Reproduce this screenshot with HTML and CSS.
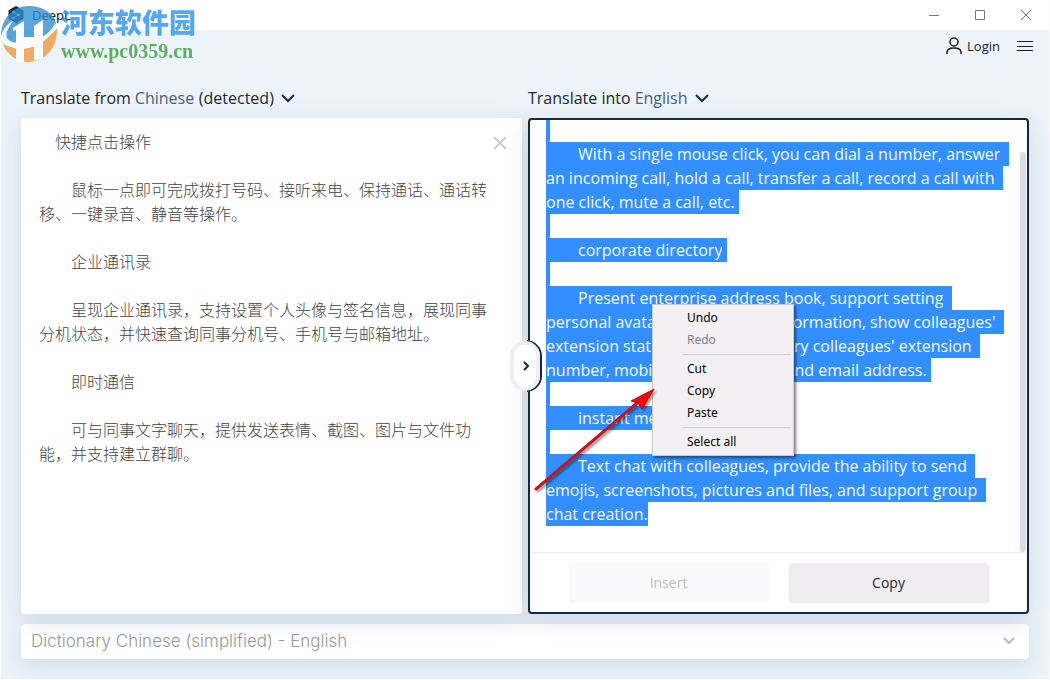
FILE: index.html
```html
<!DOCTYPE html>
<html lang="en">
<head>
    <meta charset="UTF-8">
    <meta name="viewport" content="width=device-width, initial-scale=1.0">
    <title>DeepL</title>
    <link rel="stylesheet" href="styles.css">
</head>
<body>
    <div class="window">
        <header class="titlebar">
            <svg class="app-icon" viewBox="0 0 16 18" width="16" height="18">
                <path d="M8 0l7.500 4.300v8.400L10 16v2l-3-1.600L.500 12.700V4.300z" fill="#0f2b46" />
                <path d="M5.500 6l5 3-5 3" fill="none" stroke="#fff" stroke-width=".8" />
                <circle cx="5.500" cy="6" r="1.300" fill="#fff" />
                <circle cx="10.500" cy="9" r="1.300" fill="#fff" />
                <circle cx="5.500" cy="12" r="1.300" fill="#fff" />
            </svg>
            <span class="app-name">DeepL</span>
            <div class="window-buttons">
                <button type="button" aria-label="Minimize"><svg viewBox="0 0 10 10" width="10" height="10"><path d="M0 5.500h10" /></svg></button>
                <button type="button" aria-label="Maximize"><svg viewBox="0 0 10 10" width="10" height="10"><path d="M.500.500h9v9h-9z" /></svg></button>
                <button type="button" aria-label="Close"><svg viewBox="0 0 10 10" width="10" height="10"><path d="M0 0l10 10M10 0L0 10" /></svg></button>
            </div>
        </header>

        <div class="watermark">
            <svg viewBox="0 0 58 58" width="58" height="58">
                <path d="M0 32C0 13 12 1 28 1c15 0 25 8 27 17-3 8-11 14-21 17-12 4-24 4-28-2-2-4 1-11 7-18C6 19 1 25 0 32z" fill="#3490d0" />
                <path d="M2 39c9 5 22 4 34-1 9-4 16-9 20-15 1 18-10 33-28 34-12 0-22-7-26-18z" fill="#f09a3e" />
                <path d="M12 23l11-7v41h-8V25l-3 1zM33 21l9-6v38l-9 3V38H23v-6h10z" fill="#fff" />
                <path d="M1 34c7 7 19 7 32 2 10-4 18-10 21-18-1 10-9 18-20 23C21 46 7 45 1 34z" fill="#fff" />
            </svg>
            <div class="watermark-text">
                <strong lang="zh">河东软件园</strong>
                <span>www.pc0359.cn</span>
            </div>
        </div>

        <nav class="toolbar">
            <a href="#" class="login">
                <svg viewBox="0 0 16 18" width="16" height="18">
                    <circle cx="8" cy="5" r="4" />
                    <path d="M1 17v-1.500C1 12.500 3.500 11 8 11s7 1.500 7 4.500V17" />
                </svg>
                Login
            </a>
            <button type="button" class="menu-button" aria-label="Menu">
                <svg viewBox="0 0 16 12" width="16" height="12"><path d="M0 1.500h16M0 6.500h16M0 10.500h16" /></svg>
            </button>
        </nav>

        <main>
            <div class="panels">
                <section class="side">
                    <div class="language">
                        <label for="sourceLang">Translate from</label>
                        <select id="sourceLang"><option>Chinese</option></select>
                        <span>(detected)</span>
                        <svg viewBox="0 0 14 10" width="14" height="10"><path d="M1 2l6 6 6-6" /></svg>
                    </div>
                    <div class="panel">
                        <textarea id="source" lang="zh" spellcheck="false" aria-label="Source text">　快捷点击操作

　　鼠标一点即可完成拨打号码、接听来电、保持通话、通话转移、一键录音、静音等操作。

　　企业通讯录

　　呈现企业通讯录，支持设置个人头像与签名信息，展现同事分机状态，并快速查询同事分机号、手机号与邮箱地址。

　　即时通信

　　可与同事文字聊天，提供发送表情、截图、图片与文件功能，并支持建立群聊。</textarea>
                        <button type="button" class="clear-button" aria-label="Clear">
                            <svg viewBox="0 0 14 14" width="14" height="14"><path d="M1 1l12 12M13 1L1 13" /></svg>
                        </button>
                    </div>
                </section>

                <section class="side">
                    <div class="language">
                        <label for="targetLang">Translate into</label>
                        <select id="targetLang"><option>English</option></select>
                        <svg viewBox="0 0 14 10" width="14" height="10"><path d="M1 2l6 6 6-6" /></svg>
                    </div>
                    <div class="panel panel-active">
                        <div class="scroll-area">
                            <textarea id="target" spellcheck="false" aria-label="Translation">


　　With a single mouse click, you can dial a number, answer an incoming call, hold a call, transfer a call, record a call with one click, mute a call, etc.

　　corporate directory

　　Present enterprise address book, support setting personal avatar and signature information, show colleagues' extension status, and quickly query colleagues' extension number, mobile phone number and email address.

　　instant messaging

　　Text chat with colleagues, provide the ability to send emojis, screenshots, pictures and files, and support group chat creation.</textarea>
                            <div class="scroll-thumb"></div>
                        </div>
                        <div class="actions">
                            <button type="button" disabled>Insert</button>
                            <button type="button">Copy</button>
                        </div>
                        <button type="button" class="collapse-button" aria-label="Collapse">
                            <svg viewBox="0 0 34 52" width="34" height="52">
                                <path d="M18 0c8 2 15 7 15 16v20c0 9-7 14-15 16z" fill="#fff" />
                                <path d="M18 1c8 1 14 7 14 15v20c0 8-6 14-14 15" fill="none" stroke="#0f2b46" stroke-width="2" />
                                <rect x="3" y="3" width="26" height="46" rx="13" fill="#fff" stroke="#f0eef2" stroke-width="4" />
                                <path d="M15 22l4 4-4 4" fill="none" stroke="#0f2b46" stroke-width="2" />
                            </svg>
                        </button>
                    </div>
                </section>
            </div>

            <button type="button" class="dictionary">
                <span>Dictionary Chinese (simplified) - English</span>
                <svg viewBox="0 0 12 8" width="12" height="8"><path d="M1 1l5 5 5-5" /></svg>
            </button>
        </main>

        <div class="context-menu" role="menu">
            <button type="button" role="menuitem">Undo</button>
            <button type="button" role="menuitem" disabled>Redo</button>
            <hr>
            <button type="button" role="menuitem">Cut</button>
            <button type="button" role="menuitem">Copy</button>
            <button type="button" role="menuitem">Paste</button>
            <hr>
            <button type="button" role="menuitem">Select all</button>
        </div>

        <svg class="arrow" viewBox="0 0 126 110" width="126" height="110">
            <path d="M3 105L103 20" fill="none" stroke="#c01822" stroke-width="3" stroke-linecap="round" />
            <path d="M121 5L98 17l7 2 4 6z" fill="#f50808" stroke="#b01018" stroke-width="1" />
        </svg>
    </div>

    <script>
        // Select the whole translation and show the end of it
        const target = document.getElementById('target');
        target.focus();
        target.select();
        target.scrollTop = target.scrollHeight;
    </script>
</body>
</html>
```
FILE: styles.css
```css
* {
    box-sizing: border-box;
}

body {
    margin: 0;
    font-family: "Open Sans", "Noto Sans CJK SC", sans-serif;
    color: #26262b;
}

button,
select,
textarea {
    font: inherit;
    color: inherit;
    border: none;
    background: none;
    padding: 0;
    margin: 0;
    outline: none;
}

svg {
    display: block;
    flex: none;
}

.window {
    position: relative;
    display: flex;
    flex-direction: column;
    min-height: 100vh;
    background: #ecf4fa;
    border: 1px solid #fafcfd;
    border-top: none;
}

/* Title bar */
.titlebar {
    display: flex;
    align-items: center;
    height: 30px;
    padding-left: 7px;
    background: #fff;
}

.app-name {
    margin-left: 8px;
    font-size: 13px;
    line-height: 20px;
    color: #000;
}

.window-buttons {
    display: flex;
    margin-left: auto;
}

.window-buttons button {
    display: flex;
    justify-content: center;
    align-items: center;
    width: 46px;
    height: 30px;
}

.window-buttons svg {
    fill: none;
    stroke: #777;
    stroke-width: 1;
}

.watermark {
    position: absolute;
    top: 5px;
    left: 0;
    display: flex;
    gap: 2px;
    opacity: 0.8;
}

.watermark-text {
    display: flex;
    flex-direction: column;
}

.watermark strong {
    font-size: 27px;
    line-height: 36px;
    font-weight: 900;
    color: #2b93ec;
}

.watermark span {
    font: bold 20px/20px "Liberation Serif", serif;
    color: #3f9c38;
}

/* Toolbar */
.toolbar {
    display: flex;
    justify-content: flex-end;
    align-items: center;
    gap: 17px;
    height: 32px;
    padding-right: 16px;
}

.login {
    display: flex;
    align-items: center;
    gap: 5px;
    font-size: 13px;
    line-height: 18px;
    color: #1b1b1f;
    text-decoration: none;
}

.toolbar svg {
    fill: none;
    stroke: #1b1b2f;
    stroke-width: 1.5;
}

.menu-button svg {
    stroke-width: 1;
}

/* Panels */
main {
    flex: 1;
    display: flex;
    flex-direction: column;
    gap: 10px;
    padding: 16px 20px 20px;
}

.panels {
    flex: 1;
    display: grid;
    grid-template-columns: 1fr 1fr;
    gap: 6px;
}

.side {
    display: flex;
    flex-direction: column;
}

.language {
    display: flex;
    align-items: center;
    gap: 4px;
    height: 40px;
    font-size: 16px;
    line-height: 24px;
}

.language select {
    appearance: none;
    color: #46607a;
}

.language svg {
    margin-left: 3px;
    fill: none;
    stroke: #0f2b46;
    stroke-width: 2;
}

.panel {
    position: relative;
    flex: 1;
    display: flex;
    flex-direction: column;
    background: #fff;
    border-radius: 4px;
    box-shadow: 0 6px 24px rgba(15, 43, 70, 0.12);
}

.panel-active {
    border: 2px solid #0f2b46;
}

textarea {
    display: block;
    flex: 1 1 0;
    width: 100%;
    min-height: 0;
    resize: none;
    font-size: 16px;
    line-height: 24px;
}

#source {
    padding: 12px 30px 12px 18px;
    font-weight: 300;
    color: #444;
}

.scroll-area {
    position: relative;
    display: flex;
    flex: 1 1 0;
    min-height: 0;
}

#target {
    padding: 8px 18px 26px 16px;
    scrollbar-width: none;
}

#target::selection {
    background: #338fff;
    color: #f4faff;
}

.scroll-thumb {
    position: absolute;
    top: 32px;
    right: 1px;
    bottom: 0;
    width: 6px;
    background: #d9dde5;
    border-radius: 3px;
}

.clear-button {
    position: absolute;
    top: 18px;
    right: 15px;
}

.clear-button svg {
    fill: none;
    stroke: #ccc;
    stroke-width: 2;
}

.actions {
    display: flex;
    justify-content: center;
    align-items: center;
    gap: 20px;
    height: 60px;
    border-top: 1px solid #ededf0;
}

.actions button {
    width: 200px;
    height: 40px;
    font-size: 14px;
    background: #eeecef;
    border-radius: 4px;
    box-shadow: 0 1px 4px rgba(0, 0, 0, 0.06);
}

.actions button:disabled {
    color: #bbb;
    background: #faf9fc;
    box-shadow: none;
}

.collapse-button {
    position: absolute;
    top: calc(50% - 26px);
    left: -21px;
}

.dictionary {
    display: flex;
    justify-content: space-between;
    align-items: center;
    height: 35px;
    padding: 0 14px 2px 10px;
    font-family: Inter, sans-serif;
    font-size: 17px;
    font-weight: 300;
    color: #999;
    background: #fff;
    border-radius: 4px;
    box-shadow: 0 6px 24px rgba(15, 43, 70, 0.12);
}

.dictionary svg {
    fill: none;
    stroke: #bbb;
    stroke-width: 2;
}

/* Context menu */
.context-menu {
    position: absolute;
    top: 304px;
    left: 651px;
    display: flex;
    flex-direction: column;
    width: 142px;
    padding: 2px;
    background: #f2f0f3;
    border: 1px solid #ccc;
    box-shadow: 2px 2px 3px rgba(0, 0, 0, 0.5);
}

.context-menu button {
    height: 22px;
    padding: 0 0 2px 32px;
    font-family: "Noto Sans", sans-serif;
    font-size: 12px;
    text-align: left;
    color: #000;
}

.context-menu button:disabled {
    color: #808080;
}

.context-menu hr {
    width: 108px;
    margin: 3px 0 3px 28px;
    border: none;
    border-top: 1px solid #d0cfd2;
}

.arrow {
    position: absolute;
    top: 384px;
    left: 532px;
    filter: drop-shadow(2px 2px 1px rgba(0, 0, 0, 0.4));
}
```
